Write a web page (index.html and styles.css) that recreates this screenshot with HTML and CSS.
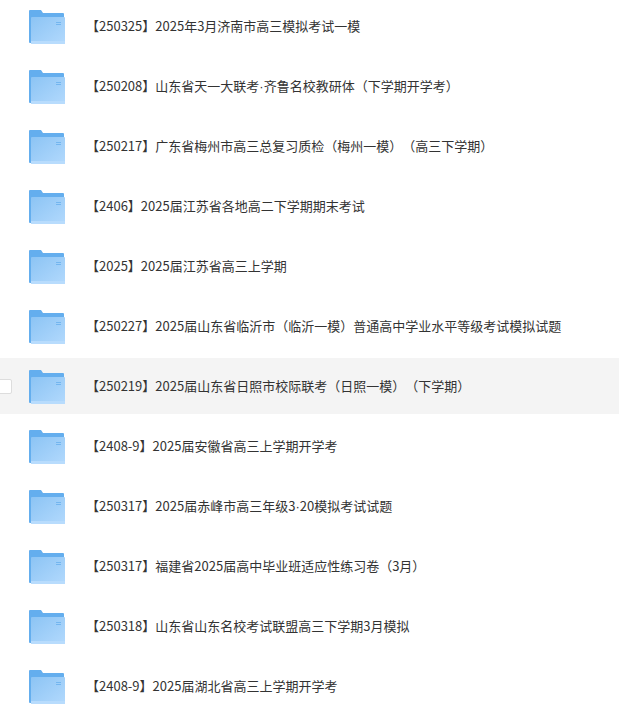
FILE: index.html
```html
<!DOCTYPE html>
<html lang="zh-CN">
<head>
    <meta charset="UTF-8">
    <title>文件列表</title>
    <link rel="stylesheet" href="styles.css">
</head>
<body>
    <svg class="defs" width="0" height="0" aria-hidden="true">
        <defs>
            <linearGradient id="folderFront" x1="0" y1="0" x2="1" y2="1">
                <stop offset="0" stop-color="#8cc4f4"/>
                <stop offset="1" stop-color="#b2d9fd"/>
            </linearGradient>
            <symbol id="folder" viewBox="0 0 36 34">
                <path d="M0 1a1 1 0 0 1 1-1h11l2 3h20a1 1 0 0 1 1 1v29H1a1 1 0 0 1-1-1z" fill="#64aeee"/>
                <path d="M2 8a1 1 0 0 1 1-1h32a1 1 0 0 1 1 1v25a1 1 0 0 1-1 1H2z" fill="url(#folderFront)"/>
                <rect x="2" y="31" width="34" height="3" fill="#b8dcfd"/>
                <rect x="27" y="12" width="5" height="1" fill="#74b6ef"/>
                <rect x="27" y="14" width="5" height="1" fill="#74b6ef"/>
            </symbol>
        </defs>
    </svg>

    <ul class="file-list">
        <li class="file-row">
            <svg class="folder-icon"><use href="#folder"/></svg>
            <span class="file-name">【250325】2025年3月济南市高三模拟考试一模</span>
        </li>
        <li class="file-row">
            <svg class="folder-icon"><use href="#folder"/></svg>
            <span class="file-name">【250208】山东省天一大联考<span class="dot">·</span>齐鲁名校教研体（下学期开学考）</span>
        </li>
        <li class="file-row">
            <svg class="folder-icon"><use href="#folder"/></svg>
            <span class="file-name">【250217】广东省梅州市高三总复习质检（梅州一模）（高三下学期）</span>
        </li>
        <li class="file-row">
            <svg class="folder-icon"><use href="#folder"/></svg>
            <span class="file-name">【2406】2025届江苏省各地高二下学期期末考试</span>
        </li>
        <li class="file-row">
            <svg class="folder-icon"><use href="#folder"/></svg>
            <span class="file-name">【2025】2025届江苏省高三上学期</span>
        </li>
        <li class="file-row">
            <svg class="folder-icon"><use href="#folder"/></svg>
            <span class="file-name">【250227】2025届山东省临沂市（临沂一模）普通高中学业水平等级考试模拟试题</span>
        </li>
        <li class="file-row active">
            <span class="check"></span>
            <svg class="folder-icon"><use href="#folder"/></svg>
            <span class="file-name">【250219】2025届山东省日照市校际联考（日照一模）（下学期）</span>
        </li>
        <li class="file-row">
            <svg class="folder-icon"><use href="#folder"/></svg>
            <span class="file-name">【2408-9】2025届安徽省高三上学期开学考</span>
        </li>
        <li class="file-row">
            <svg class="folder-icon"><use href="#folder"/></svg>
            <span class="file-name">【250317】2025届赤峰市高三年级3<span class="dot">·</span>20模拟考试试题</span>
        </li>
        <li class="file-row">
            <svg class="folder-icon"><use href="#folder"/></svg>
            <span class="file-name">【250317】福建省2025届高中毕业班适应性练习卷（3月）</span>
        </li>
        <li class="file-row">
            <svg class="folder-icon"><use href="#folder"/></svg>
            <span class="file-name">【250318】山东省山东名校考试联盟高三下学期3月模拟</span>
        </li>
        <li class="file-row">
            <svg class="folder-icon"><use href="#folder"/></svg>
            <span class="file-name">【2408-9】2025届湖北省高三上学期开学考</span>
        </li>
    </ul>
</body>
</html>
```

FILE: styles.css
```css
* {
    margin: 0;
    padding: 0;
    box-sizing: border-box;
}

html, body {
    height: 717px;
    overflow: hidden;
}

body {
    background: #fff;
    color: #333;
    font-family: "Noto Sans CJK SC", "Noto Sans", sans-serif;
    font-size: 13px;
}

.defs {
    display: block;
    height: 0;
}

.file-list {
    list-style: none;
    margin-top: -2px;
    display: flex;
    flex-direction: column;
    gap: 4px;
}

.file-row {
    position: relative;
    display: flex;
    align-items: center;
    height: 56px;
    padding-left: 29px;
}

.file-row.active {
    background: #f4f4f4;
}

.check {
    position: absolute;
    left: -3px;
    top: 21px;
    width: 15px;
    height: 15px;
    background: #fff;
    border: 1px solid #ddd;
    border-radius: 2px;
}

.folder-icon {
    flex: none;
    width: 36px;
    height: 34px;
    margin-top: 2px;
}

.file-name {
    margin-left: 21px;
    padding-bottom: 2px;
    white-space: nowrap;
    text-spacing-trim: space-all;
    font-feature-settings: "palt" 0;
}

.dot {
    font-family: "Liberation Sans", sans-serif;
}
```
